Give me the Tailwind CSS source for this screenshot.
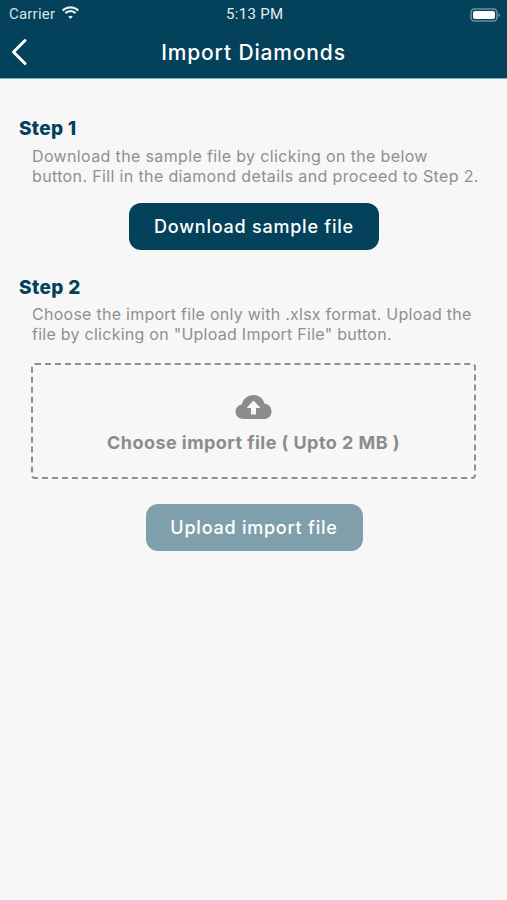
<!DOCTYPE html>
<html>
<head>
<script src="https://cdn.jsdelivr.net/npm/@tailwindcss/browser@4"></script>
</head>
<body class="m-0 bg-[#f7f7f7] font-['Inter','Liberation_Sans',sans-serif]">
<div class="w-[507px] h-[900px] flex flex-col overflow-hidden">
  <header class="h-[79px] shrink-0 bg-[#03425a] border-b border-[#7fb0bf] text-white flex flex-col">
    <div class="h-[28px] relative flex items-center justify-between pl-[9px] pr-[6px] pt-[1px]">
      <div class="flex items-center gap-[6px]">
        <span class="text-[15px] font-['Roboto'] text-[#d9e3e7] tracking-[0.2px]">Carrier</span>
        <svg width="19" height="14" viewBox="0 0 19 14" fill="#e6eef1" class="mb-[3px]"><path d="M9.5 2.6c2.7 0 5.1 1 7 2.8l1.5-1.6C15.7 1.5 12.800.3 9.500.3S3.300 1.500 1 3.800l1.500 1.600c1.900-1.800 4.300-2.800 7-2.800z"/><path d="M9.500 6.200c1.700 0 3.200.6 4.400 1.700l1.500-1.600c-1.600-1.500-3.700-2.400-5.900-2.400S5.200 4.800 3.600 6.300l1.500 1.600c1.200-1.100 2.700-1.700 4.400-1.700z"/><path d="M9.500 9.700c-.9 0-1.700.3-2.300.9l2.300 2.500 2.300-2.500c-.6-.6-1.400-.9-2.300-.9z"/></svg>
      </div>
      <span class="absolute left-[226px] top-[3px] text-[15px] font-['Roboto'] text-[#e6eef1] tracking-[0.3px]">5:13 PM</span>
      <svg width="31" height="14" viewBox="0 0 31 14"><rect x="1" y="1" width="26" height="12" rx="3.500" fill="none" stroke="#6d93a3" stroke-width="1.500"/><rect x="3" y="3" width="22" height="8" rx="2" fill="#fff"/><path d="M28.500 5v4c.9-.3 1.500-1 1.500-2s-.6-1.700-1.500-2z" fill="#6d93a3"/></svg>
    </div>
    <div class="relative flex-1 flex items-center justify-center pb-[1px]">
      <svg class="absolute left-[10px] top-[10px]" width="18" height="28" viewBox="0 0 18 28" fill="none" stroke="#fff" stroke-width="3" stroke-linecap="round" stroke-linejoin="round"><path d="M15 2.500 3.500 14 15 25.500"/></svg>
      <h1 class="text-[21px] leading-[28px] font-medium tracking-[0.85px]">Import Diamonds</h1>
    </div>
  </header>
  <main class="flex-1 flex flex-col">
    <section class="pt-[38px] pl-[19px] pr-[18px] flex flex-col">
      <h2 class="text-[19px] leading-[24px] font-extrabold text-[#03425a] tracking-[0.3px]">Step 1</h2>
      <p class="ml-[13px] mt-[5px] text-[16px] leading-[20px] text-[#8f8f8f] tracking-[0.36px] whitespace-nowrap">Download the sample file by clicking on the below<br>button. Fill in the diamond details and proceed to Step 2.</p>
      <button class="self-center mt-[17px] w-[250px] h-[47px] rounded-[12px] bg-[#03425a] text-white text-[18px] font-medium tracking-[0.77px]">Download sample file</button>
    </section>
    <section class="pt-[26px] pl-[19px] pr-[18px] flex flex-col">
      <h2 class="text-[19px] leading-[24px] font-extrabold text-[#03425a] tracking-[0.4px]">Step 2</h2>
      <p class="ml-[13px] mt-[4px] text-[16px] leading-[20px] text-[#8f8f8f] tracking-[0.26px] whitespace-nowrap">Choose the import file only with .xlsx format. Upload the<br>file by clicking on "Upload Import File" button.</p>
      <div class="ml-[12px] mt-[19px] h-[116px] w-[445px] rounded-[4px] border-2 border-dashed border-[#8f8f8f] flex flex-col items-center pt-[29px]">
        <svg width="37" height="26" viewBox="0 0 37 26"><path fill="#8c8c8c" d="M8.500 25C3.800 25 .5 21.800.5 17.800c0-3.700 2.700-6.600 6.300-7.200C8 5 12.500 1 18.300 1c5.400 0 9.900 3.500 11.300 8.700 4 .4 6.900 3.700 6.900 7.700 0 4.300-3.300 7.600-7.500 7.600z"/><path fill="#f7f7f7" d="M18.500 6.500 11.500 14h4.500v6.500h5V14h4.500z"/></svg>
        <span class="mt-[10px] text-[18px] leading-[26px] font-bold text-[#8c8c8c] tracking-[0.45px] whitespace-nowrap">Choose import file ( Upto 2 MB )</span>
      </div>
      <button class="self-center mt-[25px] w-[217px] h-[47px] rounded-[12px] bg-[#7f9fab] text-white text-[18px] font-medium tracking-[0.77px]">Upload import file</button>
    </section>
  </main>
</div>
</body>
</html>
